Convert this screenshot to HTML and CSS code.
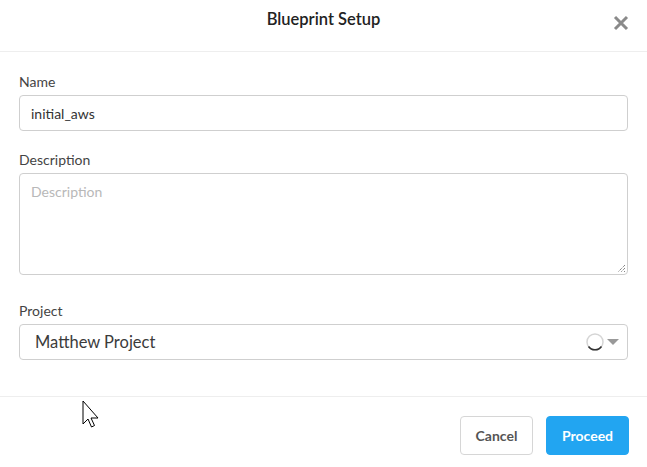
FILE: index.html
```
<!DOCTYPE html>
<html>
<head>
<meta charset="utf-8">
<link rel="stylesheet" href="styles.css">
</head>
<body>
<div class="modal">
  <header class="modal-header">
    <h1 class="title">Blueprint Setup</h1>
    <button class="close" aria-label="Close">
      <svg width="16" height="16" viewBox="0 0 16 16"><path d="M2 2 L14 14 M14 2 L2 14" stroke="#8a8a8a" stroke-width="3" stroke-linecap="butt"/></svg>
    </button>
  </header>
  <main class="modal-body">
    <div class="field">
      <label class="label">Name</label>
      <div class="input">initial_aws</div>
    </div>
    <div class="field">
      <label class="label">Description</label>
      <div class="textarea">
        <span class="placeholder">Description</span>
        <svg class="grip" width="10" height="10" viewBox="0 0 10 10"><path d="M9 2 L2 9 M9 5 L5 9 M9 8 L8 9" stroke="#555" stroke-width="1" stroke-dasharray="1 1"/></svg>
      </div>
    </div>
    <div class="field field-project">
      <label class="label">Project</label>
      <div class="select">
        <span class="select-value">Matthew Project</span>
        <span class="select-icons">
          <svg width="20" height="20" viewBox="0 0 20 20"><circle cx="10" cy="10" r="8" fill="none" stroke="#d5d5d5" stroke-width="1.5"/><path d="M3.5 14.5 A8 8 0 0 0 16.5 14.5" fill="none" stroke="#333" stroke-width="1.5"/></svg>
          <svg width="12" height="8" viewBox="0 0 12 8"><path d="M0 1 L12 1 L6 7 Z" fill="#999"/></svg>
        </span>
      </div>
    </div>
  </main>
  <footer class="modal-footer">
    <button class="btn btn-cancel">Cancel</button>
    <button class="btn btn-primary">Proceed</button>
  </footer>
  <svg class="cursor" width="20" height="30" viewBox="0 0 20 30"><path d="M1 1 L1 24 L6 19 L9.5 27 L12.5 25.5 L9 18 L16 18 Z" fill="#fff" stroke="#000" stroke-width="1"/></svg>
</div>
</body>
</html>
```
FILE: styles.css
```
* { box-sizing: border-box; }
html, body { margin: 0; padding: 0; background: #fff; }
body { font-family: Lato, "Open Sans", sans-serif; color: #333; }
.modal { position: relative; width: 647px; height: 467px; background: #fff; }
.modal-header {
  height: 52px; border-bottom: 1px solid #eeeeee;
  display: flex; align-items: center; justify-content: center; position: relative;
}
.title { margin: 0; font-size: 16.5px; font-weight: 600; color: #222; position: relative; top: -7px; }
.close {
  position: absolute; right: 18px; top: 15px; border: 0; background: none; padding: 0;
  width: 16px; height: 16px; display: block;
}
.close svg { display: block; }
.modal-body { padding: 21px 19px 0 19px; display: flex; flex-direction: column; gap: 20px; }
.field { display: flex; flex-direction: column; }
.field-project { margin-top: 7px; }
.label { font-size: 14px; color: #444; line-height: 18px; margin-bottom: 4px; }
.input {
  height: 36px; border: 1px solid #cfcfcf; border-radius: 4px;
  padding: 0 11px; display: flex; align-items: center; font-size: 14px; color: #333;
}
.textarea {
  position: relative; height: 102px; border: 1px solid #cfcfcf; border-radius: 4px;
  padding: 9px 11px; font-size: 14px;
}
.placeholder { color: #b8b8b8; }
.grip { position: absolute; right: 1px; bottom: 1px; }
.select {
  height: 36px; border: 1px solid #cfcfcf; border-radius: 4px;
  padding: 0 8px 0 15px; display: flex; align-items: center; justify-content: space-between;
}
.select-value { font-size: 16.5px; color: #3b3b3b; }
.select-icons { display: flex; align-items: center; gap: 2px; }
.select-icons svg { display: block; }
.modal-footer {
  position: absolute; left: 0; right: 0; top: 396px; height: 71px;
  border-top: 1px solid #eeeeee;
  display: flex; justify-content: flex-end; align-items: flex-start;
  padding: 19px 18px 0 0; gap: 13px;
}
.btn {
  height: 39px; border-radius: 4px; font-family: inherit; font-size: 14px; font-weight: 700;
  padding: 0 14px; cursor: pointer;
}
.btn-cancel { width: 73px; border: 1px solid #d6d6d6; background: #fff; color: #555; }
.btn-primary { width: 83px; border: 1px solid #22a5f1; background: #22a5f1; color: #fff; }
.cursor { position: absolute; left: 82px; top: 400px; }
```
